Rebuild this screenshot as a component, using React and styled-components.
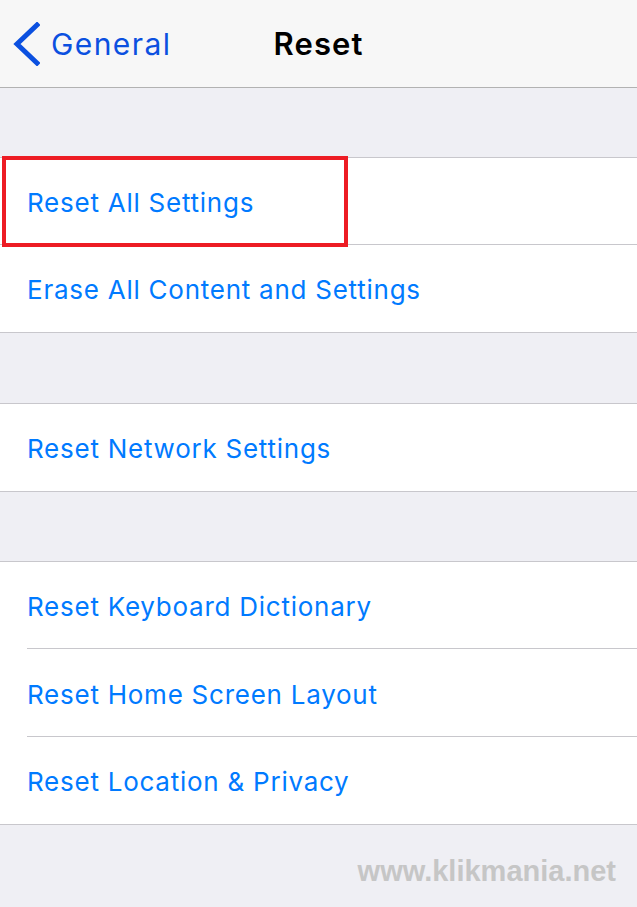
import React from "react";
import styled, { createGlobalStyle } from "styled-components";

const Global = createGlobalStyle`
  html, body { margin: 0; padding: 0; background: #efeff4; }
  body { font-family: Inter, "Liberation Sans", sans-serif; -webkit-font-smoothing: antialiased; }
`;

const Screen = styled.div`
  width: 637px;
  height: 907px;
  background: #efeff4;
  display: flex;
  flex-direction: column;
  overflow: hidden;
`;

const NavBar = styled.header`
  height: 87px;
  flex: none;
  background: #f7f7f7;
  border-bottom: 1px solid #b2b2b2;
  display: grid;
  grid-template-columns: 1fr auto 1fr;
  align-items: center;
`;

const Back = styled.div`
  display: flex;
  align-items: center;
  gap: 11px;
  padding-left: 12px;
  color: #0b50e0;
  font-size: 30px;
  letter-spacing: 1.4px;
`;

const Title = styled.h1`
  margin: 0;
  font-size: 31px;
  font-weight: 600;
  color: #000;
  letter-spacing: 1.1px;
`;

const Gap = styled.div`
  height: ${(p) => p.$h}px;
  flex: none;
`;

const Group = styled.section`
  background: #fff;
  border-top: 1px solid #c8c7cc;
  border-bottom: 1px solid #c8c7cc;
  flex: none;
`;

const Row = styled.div`
  position: relative;
  box-sizing: border-box;
  height: ${(p) => p.$h || 87}px;
  display: flex;
  align-items: center;
  padding: 2px 0 0 27px;
  font-size: 26px;
  color: #007aff;
  letter-spacing: 0.75px;
  &:not(:last-child) { border-bottom: 1px solid #c8c7cc; }
`;

const InsetRow = styled(Row)`
  &:not(:last-child) { border-bottom: none; }
  &:not(:last-child)::after {
    content: "";
    position: absolute;
    bottom: 0;
    left: 27px;
    right: 0;
    height: 1px;
    background: #c8c7cc;
  }
`;

const Highlight = styled.div`
  position: absolute;
  left: 2px;
  top: -2px;
  width: 346px;
  height: 91px;
  border: 4px solid #ed1c24;
  box-sizing: border-box;
  pointer-events: none;
`;

const Footer = styled.div`
  flex: 1;
  display: flex;
  justify-content: flex-end;
  padding: 30px 21px 0 0;
`;

const Watermark = styled.span`
  font-family: "Liberation Sans", Arial, sans-serif;
  font-weight: 700;
  font-size: 29px;
  color: #c6c6c6;
`;

const Chevron = () => (
  <svg width="28" height="44" viewBox="0 0 28 44" aria-hidden="true">
    <path d="M25 3 L5 22 L25 41" fill="none" stroke="#0b50e0" strokeWidth="5" strokeLinecap="square" />
  </svg>
);

export default function App() {
  return (
    <>
      <Global />
      <Screen>
        <NavBar>
          <Back>
            <Chevron />
            <span>General</span>
          </Back>
          <Title>Reset</Title>
          <div />
        </NavBar>
        <Gap $h={69} />
        <Group>
          <Row>
            Reset All Settings
            <Highlight />
          </Row>
          <Row>Erase All Content and Settings</Row>
        </Group>
        <Gap $h={70} />
        <Group>
          <Row>Reset Network Settings</Row>
        </Group>
        <Gap $h={69} />
        <Group>
          <InsetRow>Reset Keyboard Dictionary</InsetRow>
          <InsetRow $h={88}>Reset Home Screen Layout</InsetRow>
          <InsetRow>Reset Location &amp; Privacy</InsetRow>
        </Group>
        <Footer>
          <Watermark>www.klikmania.net</Watermark>
        </Footer>
      </Screen>
    </>
  );
}
